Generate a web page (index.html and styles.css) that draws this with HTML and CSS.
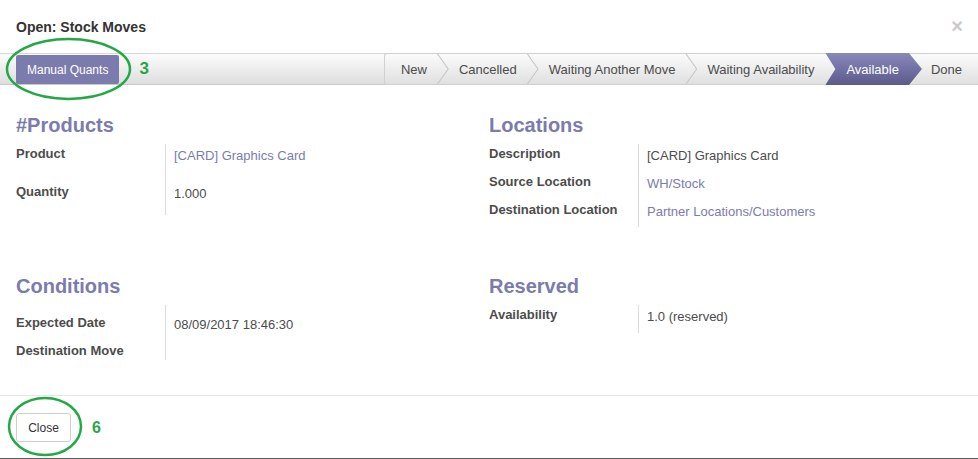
FILE: index.html
```html
<!DOCTYPE html>
<html lang="en">
<head>
<meta charset="utf-8">
<title>Open: Stock Moves</title>
<link rel="stylesheet" href="styles.css">
</head>
<body>
<div class="modal">
  <div class="modal-header">
    <h4 class="modal-title">Open: Stock Moves</h4>
    <span class="modal-close">×</span>
  </div>

  <div class="form-header">
    <div class="header-left">
      <div class="annot">
        <button class="btn-primary">Manual Quants</button>
        <svg class="ring ring-top" width="127" height="64" viewBox="0 0 127 64"><ellipse cx="63.5" cy="32" rx="61.5" ry="30" fill="none" stroke="#22a845" stroke-width="2.5"/></svg>
      </div>
      <span class="mark">3</span>
    </div>
    <ul class="statusbar">
      <li><span>New</span></li>
      <li><span>Cancelled</span></li>
      <li><span>Waiting Another Move</span></li>
      <li><span>Waiting Availability</span></li>
      <li class="active"><span>Available</span></li>
      <li><span>Done</span></li>
    </ul>
  </div>

  <div class="sheet">
    <section class="group">
      <h2 class="group-title">#Products</h2>
      <div class="field h38"><div class="label">Product</div><div class="value link">[CARD] Graphics Card</div></div>
      <div class="field h33"><div class="label">Quantity</div><div class="value">1.000</div></div>
    </section>
    <section class="group">
      <h2 class="group-title">Locations</h2>
      <div class="field h28"><div class="label">Description</div><div class="value">[CARD] Graphics Card</div></div>
      <div class="field h28"><div class="label">Source Location</div><div class="value link">WH/Stock</div></div>
      <div class="field h27"><div class="label">Destination Location</div><div class="value link">Partner Locations/Customers</div></div>
    </section>
    <section class="group">
      <h2 class="group-title">Conditions</h2>
      <div class="field h36 offset"><div class="label">Expected Date</div><div class="value">08/09/2017 18:46:30</div></div>
      <div class="field h18"><div class="label">Destination Move</div><div class="value"></div></div>
    </section>
    <section class="group">
      <h2 class="group-title">Reserved</h2>
      <div class="field h28"><div class="label">Availability</div><div class="value">1.0 (reserved)</div></div>
    </section>
  </div>

  <div class="modal-footer">
    <div class="annot">
      <button class="btn-default">Close</button>
      <svg class="ring ring-bottom" width="76" height="61" viewBox="0 0 76 61"><ellipse cx="38" cy="30.5" rx="36" ry="28.5" fill="none" stroke="#22a845" stroke-width="2.5"/></svg>
    </div>
    <span class="mark mark-6">6</span>
  </div>
</div>
</body>
</html>
```

FILE: styles.css
```css
html, body {
  margin: 0;
  padding: 0;
  background: #fff;
}

body {
  font-family: "Liberation Sans", Arial, sans-serif;
  color: #4c4c4c;
}

.modal {
  width: 978px;
  height: 459px;
  box-sizing: border-box;
  border-bottom: 1px solid #5a5a5a;
  display: flex;
  flex-direction: column;
}

/* header */
.modal-header {
  display: flex;
  justify-content: space-between;
  align-items: flex-start;
  padding: 17px 15px 16px 16px;
}

.modal-title {
  margin: 0;
  font-size: 14px;
  line-height: 20px;
  font-weight: bold;
  color: #333;
}

.modal-close {
  font-size: 20px;
  line-height: 20px;
  font-weight: bold;
  color: #cacaca;
  margin-top: -1px;
}

/* form header bar */
.form-header {
  height: 32px;
  box-sizing: border-box;
  display: flex;
  justify-content: space-between;
  align-items: stretch;
  background: linear-gradient(#fcfcfc, #dedede);
  border-top: 1px solid #d8d8d8;
  border-bottom: 1px solid #c9c9c9;
}

.header-left {
  display: flex;
  align-items: center;
  padding-left: 16px;
}

.annot {
  position: relative;
  display: flex;
}

.ring {
  position: absolute;
  pointer-events: none;
}

.ring-top {
  left: -11px;
  top: -17px;
}

.ring-bottom {
  left: -9px;
  top: -17px;
}

.btn-primary {
  font-family: "Liberation Sans", Arial, sans-serif;
  font-size: 12px;
  height: 29px;
  padding: 0 11px;
  border: none;
  border-radius: 2px;
  background: #7c7bad;
  color: #fff;
  margin-top: 1px;
}

.mark {
  font-size: 17px;
  font-weight: bold;
  color: #28a74a;
  margin-left: 20px;
  line-height: 20px;
}

/* statusbar */
.statusbar {
  list-style: none;
  margin: -1px 0;
  padding: 0;
  display: flex;
  border: 1px solid #d0d0d0;
  border-right: none;
  border-radius: 3px 0 0 3px;
  background: linear-gradient(#fbfbfb, #e0e0e0);
}

.statusbar li {
  position: relative;
  display: flex;
  align-items: center;
  padding: 0 16px;
  font-size: 13px;
  color: #4c4c4c;
}

.statusbar li span {
  position: relative;
  z-index: 2;
}

.statusbar li + li::before {
  content: "";
  position: absolute;
  left: -6px;
  top: 0;
  bottom: 0;
  width: 12px;
  background: #c9c9c9;
  clip-path: polygon(0 0, 1.4px 0, 100% 50%, 1.4px 100%, 0 100%, calc(100% - 1.4px) 50%);
  z-index: 1;
}

.statusbar li.active::before,
.statusbar li.active + li::before {
  display: none;
}

.statusbar li.active {
  color: #fff;
}

.statusbar li.active::after {
  content: "";
  position: absolute;
  left: -5px;
  right: -7px;
  top: -1px;
  bottom: -1px;
  background: linear-gradient(#8988ba, #5b5a8b);
  clip-path: polygon(0 0, calc(100% - 13px) 0, 100% 50%, calc(100% - 13px) 100%, 0 100%, 10px 50%);
  z-index: 1;
}

/* sheet */
.sheet {
  flex: 1;
  display: grid;
  grid-template-columns: 473px 1fr;
  grid-template-rows: 115px auto;
  row-gap: 46px;
  padding: 28px 0 0 16px;
  align-content: start;
}

.group-title {
  margin: 0 0 7px;
  font-size: 20px;
  line-height: 24px;
  font-weight: bold;
  color: #7c7bad;
}

.field {
  display: grid;
  grid-template-columns: 149px 1fr;
}

.label {
  font-size: 13px;
  line-height: 19px;
  font-weight: bold;
  color: #4c4c4c;
}

.value {
  border-left: 1px solid #dcdcdc;
  padding-left: 8px;
  padding-top: 2px;
  font-size: 13px;
  line-height: 19px;
  color: #4c4c4c;
}

.value.link {
  color: #7c7bad;
}

.offset .label { padding-top: 8px; }
.offset .value { padding-top: 10px; }

.h18 { height: 18px; }
.h27 { height: 27px; }
.h28 { height: 28px; }
.h33 { height: 33px; }
.h36 { height: 36px; }
.h38 { height: 38px; }

/* footer */
.modal-footer {
  border-top: 1px solid #e5e5e5;
  padding: 17px 0 0 16px;
  height: 63px;
  box-sizing: border-box;
  display: flex;
  align-items: flex-start;
}

.btn-default {
  font-family: "Liberation Sans", Arial, sans-serif;
  font-size: 12px;
  height: 29px;
  width: 55px;
  padding: 0;
  background: #fff;
  border: 1px solid #cfcfcf;
  border-radius: 3px;
  color: #333;
}

.mark-6 {
  font-size: 16px;
  margin-left: 21px;
  margin-top: 5px;
}
```
